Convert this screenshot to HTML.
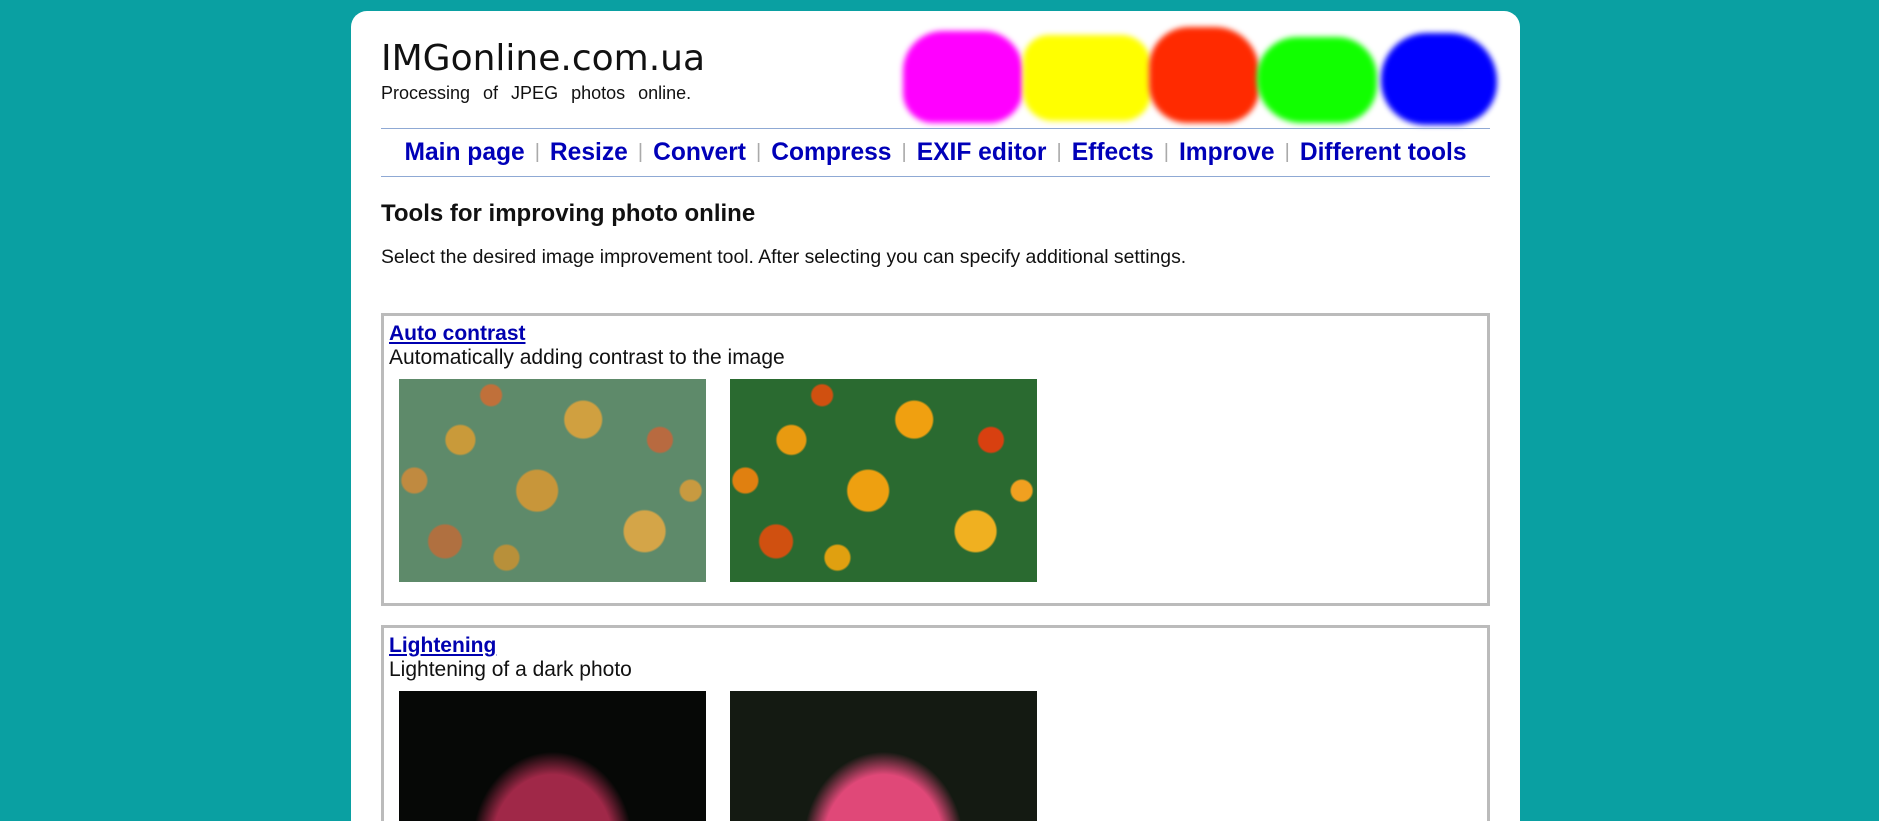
<!DOCTYPE html>
<html><head><meta charset="utf-8"><style>
html,body{margin:0;height:821px;overflow:hidden}
body{background:#0aa0a2;width:1879px;position:relative;font-family:"Liberation Sans",Arial,sans-serif}
.card{position:absolute;left:351px;top:11px;width:1169px;height:810px;overflow:hidden;background:#fff;border-radius:16px 16px 0 0}
.abs{position:absolute}
.t{left:30px;top:27px;font-family:"DejaVu Sans",sans-serif;font-size:36px;color:#111;white-space:nowrap}
.s{left:30px;top:72px;font-size:18px;color:#111;word-spacing:8px;white-space:nowrap}
.b{position:absolute;filter:blur(3px)}
.line{left:30px;width:1109px;height:1px;background:#8fa9d4}
.nav{left:30px;width:1109px;top:128px;text-align:center;font-size:24.6px;font-weight:bold;color:#0000b8;white-space:nowrap}
.nav i{font-style:normal;color:#aaa;font-weight:normal;font-size:20px;margin:0 10px;position:relative;top:-2px}
h1{position:absolute;left:30px;top:189px;margin:0;font-size:24px;color:#111}
.p{left:30px;top:235px;font-size:19.4px;color:#111;white-space:nowrap}
.box{position:absolute;left:30px;width:1103px;border:3px solid #bbb;background:#fff}
.box a{position:absolute;left:5px;top:6px;font-size:21px;font-weight:bold;color:#0000b0;text-decoration:underline}
.box .d{position:absolute;left:5px;top:30px;font-size:21px;color:#111;white-space:nowrap}
.img{position:absolute;width:307px;height:203px;top:63px}
</style></head><body>
<div class="card">
<div class="abs t">IMGonline.com.ua</div>
<div class="abs s">Processing of JPEG photos online.</div>
<div class="b" style="left:552px;top:20px;width:120px;height:92px;background:#ff00ff;border-radius:40px 40px 34px 30px"></div>
<div class="b" style="left:672px;top:24px;width:128px;height:86px;background:#ffff00;border-radius:26px 30px 28px 30px"></div>
<div class="b" style="left:798px;top:16px;width:110px;height:96px;background:#ff2a00;border-radius:40px 44px 34px 38px"></div>
<div class="b" style="left:906px;top:26px;width:120px;height:86px;background:#11ff00;border-radius:40px 40px 38px 44px"></div>
<div class="b" style="left:1030px;top:22px;width:116px;height:92px;background:#0000ff;border-radius:46px 48px 42px 44px"></div>
<div class="abs line" style="top:117px"></div>
<div class="abs nav">Main page<i>|</i>Resize<i>|</i>Convert<i>|</i>Compress<i>|</i>EXIF editor<i>|</i>Effects<i>|</i>Improve<i>|</i>Different tools</div>
<div class="abs line" style="top:165px"></div>
<h1>Tools for improving photo online</h1>
<div class="abs p">Select the desired image improvement tool. After selecting you can specify additional settings.</div>
<div class="box" style="top:302px;height:287px">
<a>Auto contrast</a><div class="d">Automatically adding contrast to the image</div>
<div class="img" style="left:15px;background:radial-gradient(circle at 20% 30%,#c99a3a 0 14px,transparent 16px),radial-gradient(circle at 60% 20%,#d0a040 0 18px,transparent 20px),radial-gradient(circle at 45% 55%,#c8963a 0 20px,transparent 22px),radial-gradient(circle at 80% 75%,#d4a548 0 20px,transparent 22px),radial-gradient(circle at 15% 80%,#b07040 0 16px,transparent 18px),radial-gradient(circle at 85% 30%,#b86a40 0 12px,transparent 14px),radial-gradient(circle at 5% 50%,#c08a40 0 12px,transparent 14px),radial-gradient(circle at 35% 88%,#b8903a 0 12px,transparent 14px),radial-gradient(circle at 95% 55%,#c89a40 0 10px,transparent 12px),radial-gradient(circle at 30% 8%,#c0703a 0 10px,transparent 12px),#5e8a6a"></div>
<div class="img" style="left:346px;background:radial-gradient(circle at 20% 30%,#e89a10 0 14px,transparent 16px),radial-gradient(circle at 60% 20%,#f0a010 0 18px,transparent 20px),radial-gradient(circle at 45% 55%,#eea010 0 20px,transparent 22px),radial-gradient(circle at 80% 75%,#f0b020 0 20px,transparent 22px),radial-gradient(circle at 15% 80%,#d05010 0 16px,transparent 18px),radial-gradient(circle at 85% 30%,#d84010 0 12px,transparent 14px),radial-gradient(circle at 5% 50%,#e08010 0 12px,transparent 14px),radial-gradient(circle at 35% 88%,#e0a010 0 12px,transparent 14px),radial-gradient(circle at 95% 55%,#f0a020 0 10px,transparent 12px),radial-gradient(circle at 30% 8%,#d05010 0 10px,transparent 12px),#2a6a30"></div>
</div>
<div class="box" style="top:614px;height:300px">
<a>Lightening</a><div class="d">Lightening of a dark photo</div>
<div class="img" style="left:15px;background:radial-gradient(ellipse 70px 80px at 50% 75%,#a02848 0 60px,transparent 80px),#060806"></div>
<div class="img" style="left:346px;background:radial-gradient(ellipse 70px 80px at 50% 75%,#e04878 0 60px,transparent 80px),#141a12"></div>
</div>
</div>
</body></html>
